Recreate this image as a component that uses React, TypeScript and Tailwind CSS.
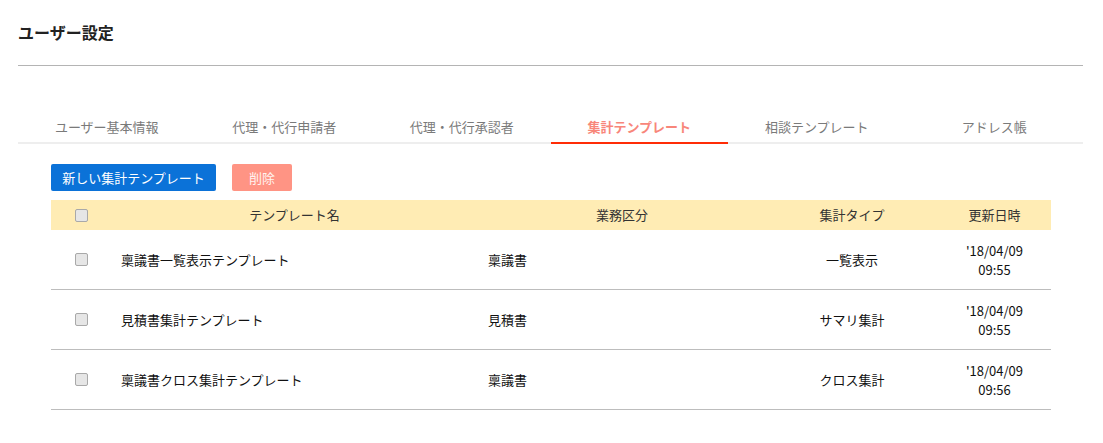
import React, { useState } from "react";

const tabs = [
  "ユーザー基本情報",
  "代理・代行申請者",
  "代理・代行承認者",
  "集計テンプレート",
  "相談テンプレート",
  "アドレス帳",
];

const rows = [
  { name: "稟議書一覧表示テンプレート", category: "稟議書", type: "一覧表示", date: "'18/04/09", time: "09:55" },
  { name: "見積書集計テンプレート", category: "見積書", type: "サマリ集計", date: "'18/04/09", time: "09:55" },
  { name: "稟議書クロス集計テンプレート", category: "稟議書", type: "クロス集計", date: "'18/04/09", time: "09:56" },
];

const Check = () => (
  <span className="inline-block w-[13px] h-[13px] rounded-[2px] border border-[#a9a9a9] bg-[#e6e6e6]" />
);

const App = () => {
  const [active, setActive] = useState(3);

  return (
    <div
      className="w-[1103px] h-[443px] bg-white pl-[18px] pr-[20px] text-[13px] text-[#222]"
      style={{ fontFamily: '"Noto Sans CJK JP", "Noto Sans", sans-serif' }}
    >
      <div className="h-[66px] border-b border-[#b4b4b4] pt-[20px] text-[16px] font-bold leading-[24px] text-[#222]">
        ユーザー設定
      </div>

      <div className="mt-[45px] flex border-b-2 border-[#eeeeee]">
        {tabs.map((t, i) => (
          <div
            key={t}
            onClick={() => setActive(i)}
            className={
              "flex-1 h-[33px] -mb-[2px] flex items-center justify-center cursor-pointer " +
              (i === active
                ? "border-b-2 border-[#ff2c06] text-[#f8867a] font-bold"
                : "border-b-2 border-transparent text-[#7a7a7a]")
            }
          >
            {t}
          </div>
        ))}
      </div>

      <div className="px-[33px]">
        <div className="mt-[20px] flex gap-[16px]">
          <button className="h-[27px] w-[165px] rounded-[2px] bg-[#0b72d8] text-white text-[13px] leading-none">
            新しい集計テンプレート
          </button>
          <button className="h-[27px] w-[60px] rounded-[2px] bg-[#ff9484] text-[#fff3f0] text-[13px] leading-none">
            削除
          </button>
        </div>

        <div className="mt-[9px] w-[1000px]">
          <div className="flex h-[30px] items-center bg-[#ffecb4] text-[#333]">
            <div className="w-[60px] flex justify-center"><Check /></div>
            <div className="w-[367px] text-center">テンプレート名</div>
            <div className="w-[288px] text-center">業務区分</div>
            <div className="w-[172px] text-center">集計タイプ</div>
            <div className="flex-1 text-center">更新日時</div>
          </div>
          {rows.map((r) => (
            <div key={r.name} className="flex h-[60px] items-center border-b border-[#bdbdbd] text-[#111]">
              <div className="w-[60px] flex justify-center"><Check /></div>
              <div className="w-[367px] pl-[10px]">{r.name}</div>
              <div className="w-[288px] pl-[10px]">{r.category}</div>
              <div className="w-[172px] text-center">{r.type}</div>
              <div className="flex-1 text-center leading-[19px]">
                <div>{r.date}</div>
                <div>{r.time}</div>
              </div>
            </div>
          ))}
        </div>
      </div>
    </div>
  );
};

export default App;
